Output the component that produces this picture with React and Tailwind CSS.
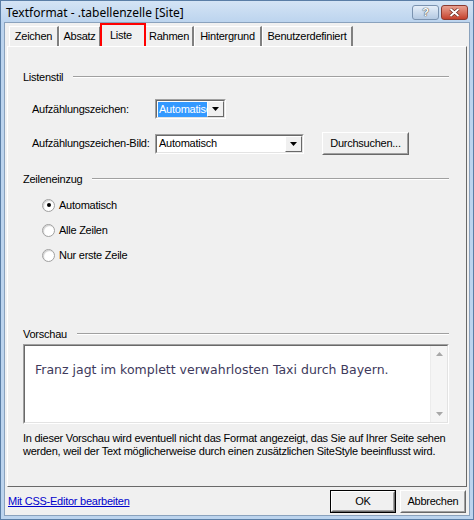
const tabs = [
  { label: "Zeichen", w: "w-[50px]" },
  { label: "Absatz", w: "w-[42px]" },
  { label: "Liste", w: "w-[46px]", active: true },
  { label: "Rahmen", w: "w-[49px]" },
  { label: "Hintergrund", w: "w-[68px]" },
  { label: "Benutzerdefiniert", w: "w-[91px]" },
];

function Arrow() {
  return (
    <div className="w-[17px] h-full bg-[#f0f0f0] border border-t-white border-l-white border-r-[#696969] border-b-[#696969] flex items-center justify-center">
      <svg width="7" height="4" viewBox="0 0 7 4">
        <path d="M0 0H7L3.5 4Z" fill="#000" />
      </svg>
    </div>
  );
}

function Select({ w, children }) {
  return (
    <div className={`${w} shrink-0 h-[20px] border border-t-[#a0a0a0] border-l-[#a0a0a0] border-r-white border-b-white`}>
      <div className="h-full border border-t-[#696969] border-l-[#696969] border-r-[#e3e3e3] border-b-[#e3e3e3] bg-white flex items-stretch">
        <div className="flex-1 flex items-center px-[1px] overflow-hidden whitespace-nowrap">{children}</div>
        <Arrow />
      </div>
    </div>
  );
}

function Button({ w, children, def }) {
  const inner = (
    <div className="h-full border border-t-white border-l-white border-r-[#696969] border-b-[#696969] bg-[#f0f0f0]">
      <div className="h-full border border-t-[#f0f0f0] border-l-[#f0f0f0] border-r-[#a0a0a0] border-b-[#a0a0a0] flex items-center justify-center whitespace-nowrap">
        {children}
      </div>
    </div>
  );
  return (
    <div className={`${w} shrink-0 h-[23px] ${def ? "border border-black" : ""}`}>{inner}</div>
  );
}

function Group({ title }) {
  return (
    <div className="flex items-center h-[14px]">
      <span className="whitespace-nowrap">{title}</span>
      <div className="flex-1 ml-[10px] h-[2px] border-t border-t-[#a0a0a0] border-b border-b-white" />
    </div>
  );
}

function Radio({ label, checked }) {
  return (
    <div className="flex items-center h-[14px] pl-[19px]">
      <div className="w-[13px] h-[13px] rounded-full border border-[#a0a0a0] bg-white flex items-center justify-center shadow-[inset_1px_1px_1px_#d0d0d0]">
        {checked && <div className="w-[4px] h-[4px] rounded-full bg-black" />}
      </div>
      <span className="ml-[4px]">{label}</span>
    </div>
  );
}

export default function App() {
  return (
    <div className="w-[474px] h-[520px] flex flex-col bg-[#bcd4ee] border border-[#5a7ea6] font-['Liberation_Sans',sans-serif] text-[11px] tracking-[-0.25px] text-black leading-none">
      <div className="h-[21px] flex items-center justify-between pl-[5px] pr-[5px] bg-gradient-to-b from-[#d4e4f5] to-[#bcd4ee]">
        <span className="text-[12px] tracking-normal font-['Noto_Sans',sans-serif] text-black mt-[2px]">
          Textformat - .tabellenzelle [Site]
        </span>
        <div className="flex gap-[2px] mt-[2px]">
          <div className="w-[27px] h-[15px] rounded-[3px] border border-[#7b93b0] bg-gradient-to-b from-[#e6eff9] to-[#b4c9e2] flex items-center justify-center">
            <span className="text-[11px] font-bold text-white [text-shadow:0_0_1px_#333,0_0_1px_#333]">?</span>
          </div>
          <div className="w-[27px] h-[15px] rounded-[3px] border border-[#8a3a30] bg-gradient-to-b from-[#e8a090] to-[#c4402c] flex items-center justify-center">
            <svg width="11" height="9" viewBox="0 0 11 9">
              <path d="M1.5 1L9.5 8M9.5 1L1.5 8" stroke="#5a1a10" strokeWidth="3.2" />
              <path d="M1.5 1L9.5 8M9.5 1L1.5 8" stroke="#fff" strokeWidth="2" />
            </svg>
          </div>
        </div>
      </div>

      <div className="flex-1 mx-[3px] mb-[3px] bg-[#f0f0f0] border border-[#8aa2bd] flex flex-col px-[2px]">
        <div className="flex items-end h-[23px] pl-[2px]">
          {tabs.map((t) =>
            t.active ? (
              <div
                key={t.label}
                className={`${t.w} h-[23px] -mx-[1px] border-2 border-[#ff0000] border-b-0 bg-[#f0f0f0] relative z-10 flex items-start pt-[5px] pl-[8px]`}
              >
                {t.label}
              </div>
            ) : (
              <div
                key={t.label}
                className={`${t.w} h-[20px] border-t border-l border-t-white border-l-white border-r-2 border-r-[#808080] flex items-center justify-center whitespace-nowrap`}
              >
                {t.label}
              </div>
            )
          )}
        </div>

        <div className="h-[441px] border border-t-white border-l-white border-r-[#696969] border-b-[#696969] flex flex-col pl-[15px] pr-[17px]">
          <div className="mt-[23px]">
            <Group title="Listenstil" />
          </div>
          <div className="mt-[15px] flex items-center pl-[9px]">
            <span className="w-[123px] shrink-0 whitespace-nowrap">Aufzählungszeichen:</span>
            <Select w="w-[71px]">
              <span className="bg-[#3399ff] text-white px-[1px] py-[2px]">Automatisch</span>
            </Select>
          </div>
          <div className="mt-[13px] flex items-center pl-[9px]">
            <span className="w-[123px] shrink-0 whitespace-nowrap">Aufzählungszeichen-Bild:</span>
            <Select w="w-[149px]">
              <span className="px-[1px]">Automatisch</span>
            </Select>
            <div className="ml-[18px]">
              <Button w="w-[87px]">Durchsuchen...</Button>
            </div>
          </div>

          <div className="mt-[17px]">
            <Group title="Zeileneinzug" />
          </div>
          <div className="mt-[12px] flex flex-col gap-[11px]">
            <Radio label="Automatisch" checked />
            <Radio label="Alle Zeilen" />
            <Radio label="Nur erste Zeile" />
          </div>

          <div className="mt-[65px]">
            <Group title="Vorschau" />
          </div>
          <div className="mt-[3px] h-[80px] border border-t-[#a0a0a0] border-l-[#a0a0a0] border-r-white border-b-white">
            <div className="h-full border border-t-[#696969] border-l-[#696969] border-r-[#e3e3e3] border-b-[#e3e3e3] bg-white flex">
              <div className="flex-1 pt-[18px] pl-[10px] text-[12.5px] tracking-normal text-[#3e3a5c] font-['DejaVu_Sans',sans-serif] whitespace-nowrap">
                Franz jagt im komplett verwahrlosten Taxi durch Bayern.
              </div>
              <div className="w-[17px] bg-[#f5f5f5] border-l border-[#ececec] flex flex-col justify-between items-center py-[6px]">
                <svg width="7" height="4" viewBox="0 0 7 4">
                  <path d="M0 4H7L3.5 0Z" fill="#a8a8a8" />
                </svg>
                <svg width="7" height="4" viewBox="0 0 7 4">
                  <path d="M0 0H7L3.5 4Z" fill="#a8a8a8" />
                </svg>
              </div>
            </div>
          </div>
          <p className="mt-[8px] -mr-[12px] leading-[13px]">
            In dieser Vorschau wird eventuell nicht das Format angezeigt, das Sie auf Ihrer Seite sehen werden, weil der Text möglicherweise durch einen zusätzlichen SiteStyle beeinflusst wird.
          </p>
        </div>

        <div className="flex-1 flex items-center justify-between pl-[1px] pr-[1px]">
          <span className="text-[#0000cc] underline">Mit CSS-Editor bearbeiten</span>
          <div className="flex gap-[4px]">
            <Button w="w-[66px]" def>OK</Button>
            <Button w="w-[66px]">Abbrechen</Button>
          </div>
        </div>
      </div>
    </div>
  );
}
